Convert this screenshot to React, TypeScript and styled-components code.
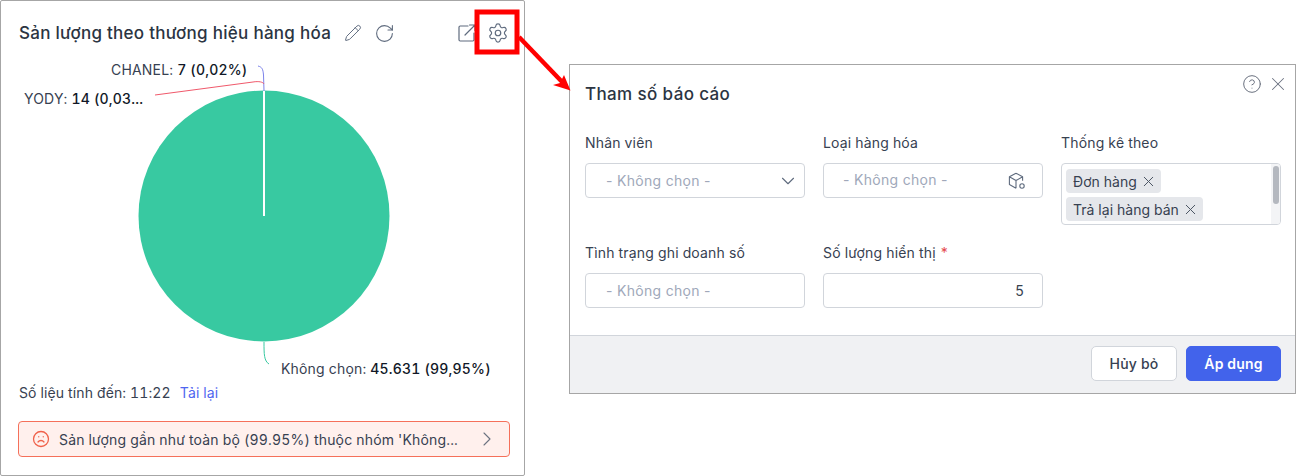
import React from "react";
import styled, { createGlobalStyle } from "styled-components";
import { ChevronDown, ChevronRight, CircleHelp, Frown, Pencil, RotateCw, Settings, X } from "lucide-react";

const GlobalStyle = createGlobalStyle`
  html, body {
    margin: 0;
    padding: 0;
    background: #fff;
    font-family: "Inter", "Liberation Sans", sans-serif;
    font-variant-numeric: tabular-nums;
    color: #1f2937;
  }
  * { box-sizing: border-box; }
`;

const Page = styled.div`
  position: relative;
  width: 1296px;
  height: 476px;
  display: flex;
  align-items: flex-start;
  overflow: hidden;
`;

const Card = styled.section`
  width: 525px;
  height: 476px;
  flex-shrink: 0;
  border: 1px solid #a6a6a6;
  border-radius: 2px;
  padding: 20px 14px 0 18px;
  display: flex;
  flex-direction: column;
`;

const CardHeader = styled.header`
  display: flex;
  align-items: center;
  height: 24px;
  color: #5f6b7e;
`;

const CardTitle = styled.h2`
  margin: 0 13px 0 0;
  font-size: 17px;
  font-weight: 500;
  line-height: 24px;
  letter-spacing: 0.27px;
  color: #2b3442;
  white-space: nowrap;
`;

const HeaderIcon = styled.span<{ $gap?: number }>`
  display: inline-flex;
  margin-left: ${(p) => p.$gap ?? 0}px;
`;

const ChartArea = styled.div`
  position: relative;
  height: 338px;
  margin: 0 -14px 0 -18px;
`;

const ChartLabel = styled.div<{ $x: number; $y: number }>`
  position: absolute;
  left: ${(p) => p.$x}px;
  top: ${(p) => p.$y}px;
  font-size: 14px;
  line-height: 18px;
  letter-spacing: 0.18px;
  white-space: nowrap;
  color: #374151;
  b {
    font-weight: 500;
    color: #111827;
  }
`;

const UpdatedRow = styled.div`
  display: flex;
  gap: 9px;
  font-size: 14px;
  line-height: 20px;
  letter-spacing: 0.12px;
  color: #374151;
`;

const ReloadLink = styled.a`
  color: #4f66f0;
`;

const Alert = styled.div`
  display: flex;
  align-items: center;
  height: 36px;
  margin: 18px 0 0 -1px;
  padding: 0 10px 0 13px;
  border: 1px solid #f5705a;
  border-radius: 4px;
  background: #fff0ed;
  font-size: 14px;
  letter-spacing: 0.17px;
  color: #374151;
  svg:first-child {
    color: #f0614a;
    margin-right: 9px;
  }
  svg:last-child {
    color: #6b7280;
    margin-left: auto;
  }
`;

const Dialog = styled.section`
  position: relative;
  width: 727px;
  height: 330px;
  flex-shrink: 0;
  margin: 64px 0 0 44px;
  border: 1px solid #a6a6a6;
  display: flex;
  flex-direction: column;
`;

const DialogActions = styled.div`
  position: absolute;
  top: 8px;
  right: 6px;
  display: flex;
  align-items: center;
  gap: 5px;
  color: #6b7280;
`;

const DialogBody = styled.div`
  flex: 1;
  padding: 16px 15px 0;
`;

const DialogTitle = styled.h3`
  margin: 0 0 26px;
  font-size: 17px;
  font-weight: 500;
  line-height: 26px;
  letter-spacing: 0.37px;
  color: #2b3442;
`;

const FieldGrid = styled.div`
  display: grid;
  grid-template-columns: repeat(3, 220px);
  column-gap: 18px;
  row-gap: 18px;
  align-items: start;
`;

const Field = styled.div`
  display: flex;
  flex-direction: column;
  gap: 10px;
`;

const FieldLabel = styled.label`
  font-size: 14px;
  line-height: 20px;
  letter-spacing: 0.17px;
  color: #374151;
  em {
    font-style: normal;
    color: #e5484d;
  }
`;

const Control = styled.div<{ $right?: boolean; $raised?: boolean }>`
  display: flex;
  align-items: center;
  justify-content: ${(p) => (p.$right ? "flex-end" : "space-between")};
  height: 35px;
  padding: ${(p) => (p.$raised ? "0 5px 2px 19px" : "0 5px 0 20px")};
  padding-right: ${(p) => (p.$right ? 18 : 5)}px;
  border: 1px solid #d1d5db;
  border-radius: 4px;
  font-size: 14px;
  font-variant-numeric: normal;
  letter-spacing: 0.3px;
  color: #a0a8ba;
  svg {
    color: #5f6b7e;
  }
`;

const CubeSvg = styled.svg`
  margin-right: 11px;
  margin-top: 2px;
`;

const ValueText = styled.span`
  color: #374151;
`;

const MultiBox = styled.div`
  position: relative;
  height: 62px;
  padding: 5px 0 0 4px;
  border: 1px solid #d1d5db;
  border-radius: 4px;
  overflow: hidden;
  display: flex;
  flex-direction: column;
  align-items: flex-start;
  gap: 4px;
`;

const Tag = styled.span`
  display: inline-flex;
  align-items: center;
  height: 24px;
  padding: 0 4px 0 7px;
  border-radius: 4px;
  background: #e5e7eb;
  font-size: 14px;
  letter-spacing: 0.05px;
  color: #374151;
  svg {
    color: #4b5563;
    margin-left: 3px;
  }
`;

const ScrollTrack = styled.div`
  position: absolute;
  top: 0;
  right: 0;
  bottom: 0;
  width: 9px;
  background: #f3f4f6;
`;

const ScrollThumb = styled.div`
  margin: 2px 1px 0 2px;
  height: 38px;
  border-radius: 3px;
  background: #b4b8bf;
`;

const DialogFooter = styled.footer`
  height: 58px;
  display: flex;
  align-items: center;
  justify-content: flex-end;
  gap: 9px;
  padding: 0 14px 2px 0;
  background: #f0f1f3;
  border-top: 1px solid #d1d5db;
`;

const Button = styled.button<{ $primary?: boolean }>`
  height: 35px;
  width: ${(p) => (p.$primary ? 95 : 86)}px;
  border-radius: 5px;
  border: 1px solid ${(p) => (p.$primary ? "#4263eb" : "#d1d5db")};
  background: ${(p) => (p.$primary ? "#4263eb" : "#fff")};
  color: ${(p) => (p.$primary ? "#fff" : "#374151")};
  font-family: inherit;
  font-size: 14px;
  font-weight: ${(p) => (p.$primary ? 600 : 500)};
  letter-spacing: 0.2px;
`;

const Callout = styled.svg`
  position: absolute;
  left: 0;
  top: 0;
  pointer-events: none;
`;

const PieSvg = styled.svg`
  display: block;
`;

const PieChart = () => (
  <PieSvg width="525" height="336" viewBox="0 0 525 336">
    <circle cx="263" cy="171" r="125.5" fill="#38c9a1" />
    <rect x="262" y="46" width="2" height="125" fill="#fff" />
    <path d="M257 21 C261 22 262 24 262.5 30 L263 46" fill="none" stroke="#7c83ea" strokeWidth="1" />
    <path d="M154 50 L252 37 C258 36 262 37 263 39" fill="none" stroke="#f0596b" strokeWidth="1" />
    <path d="M263 297 C263 309 263 316 268 319" fill="none" stroke="#38c9a1" strokeWidth="1" />
  </PieSvg>
);

const ShareIcon = () => (
  <svg width="18" height="18" viewBox="0 0 18 18" fill="none" stroke="currentColor" strokeWidth="1.2" strokeLinecap="round" strokeLinejoin="round">
    <path d="M10 2H2.2A1.2 1.2 0 0 0 1 3.2v12.6A1.2 1.2 0 0 0 2.2 17h12.6a1.2 1.2 0 0 0 1.2-1.2V9" />
    <path d="M7 11 17 1M11.5 1H17v5.5" />
  </svg>
);

const CubeIcon = () => (
  <CubeSvg width="18" height="18" viewBox="0 0 18 18" fill="none" stroke="currentColor" strokeWidth="1.1" strokeLinejoin="round">
    <path d="M8 1.2 14.6 4.8v4M8 1.2 1.4 4.8v7.8L8 16.2M1.4 4.8 8 8.6l6.6-3.8M8 8.6v7.6" />
    <circle cx="14" cy="14" r="2.2" />
  </CubeSvg>
);

export default function App() {
  return (
    <Page>
      <GlobalStyle />
      <Card>
        <CardHeader>
          <CardTitle>Sản lượng theo thương hiệu hàng hóa</CardTitle>
          <HeaderIcon><Pencil size={18} strokeWidth={1.3} /></HeaderIcon>
          <HeaderIcon $gap={12}><RotateCw size={21} strokeWidth={1.25} /></HeaderIcon>
          <HeaderIcon $gap={63}><ShareIcon /></HeaderIcon>
          <HeaderIcon $gap={11}><Settings size={22} strokeWidth={1.3} /></HeaderIcon>
        </CardHeader>
        <ChartArea>
          <PieChart />
          <ChartLabel $x={110} $y={16}>CHANEL: <b>7 (0,02%)</b></ChartLabel>
          <ChartLabel $x={23} $y={45}>YODY: <b>14 (0,03...</b></ChartLabel>
          <ChartLabel $x={280} $y={315}>Không chọn: <b>45.631 (99,95%)</b></ChartLabel>
        </ChartArea>
        <UpdatedRow>
          <span>Số liệu tính đến: 11:22</span>
          <ReloadLink>Tải lại</ReloadLink>
        </UpdatedRow>
        <Alert>
          <Frown size={18} strokeWidth={1.7} />
          <span>Sản lượng gần như toàn bộ (99.95%) thuộc nhóm 'Không...</span>
          <ChevronRight size={24} strokeWidth={1.1} />
        </Alert>
      </Card>

      <Dialog>
        <DialogActions>
          <CircleHelp size={20} strokeWidth={1.2} />
          <X size={22} strokeWidth={1.1} />
        </DialogActions>
        <DialogBody>
          <DialogTitle>Tham số báo cáo</DialogTitle>
          <FieldGrid>
            <Field>
              <FieldLabel>Nhân viên</FieldLabel>
              <Control>
                <span>- Không chọn -</span>
                <ChevronDown size={22} strokeWidth={1.2} />
              </Control>
            </Field>
            <Field>
              <FieldLabel>Loại hàng hóa</FieldLabel>
              <Control $raised>
                <span>- Không chọn -</span>
                <CubeIcon />
              </Control>
            </Field>
            <Field>
              <FieldLabel>Thống kê theo</FieldLabel>
              <MultiBox>
                <Tag>Đơn hàng<X size={17} strokeWidth={1.4} /></Tag>
                <Tag>Trả lại hàng bán<X size={17} strokeWidth={1.4} /></Tag>
                <ScrollTrack><ScrollThumb /></ScrollTrack>
              </MultiBox>
            </Field>
            <Field>
              <FieldLabel>Tình trạng ghi doanh số</FieldLabel>
              <Control>
                <span>- Không chọn -</span>
              </Control>
            </Field>
            <Field>
              <FieldLabel>Số lượng hiển thị <em>*</em></FieldLabel>
              <Control $right>
                <ValueText>5</ValueText>
              </Control>
            </Field>
          </FieldGrid>
        </DialogBody>
        <DialogFooter>
          <Button>Hủy bỏ</Button>
          <Button $primary>Áp dụng</Button>
        </DialogFooter>
      </Dialog>

      <Callout width="1296" height="476" viewBox="0 0 1296 476">
        <rect x="477" y="12" width="40" height="40" fill="none" stroke="#f00" strokeWidth="5" />
        <path d="M519 37 L566 86" fill="none" stroke="#f00" strokeWidth="4.5" />
        <path d="M570.5 90.5 L553 85 L560 83 L564 75 Z" fill="#f00" />
      </Callout>
    </Page>
  );
}
